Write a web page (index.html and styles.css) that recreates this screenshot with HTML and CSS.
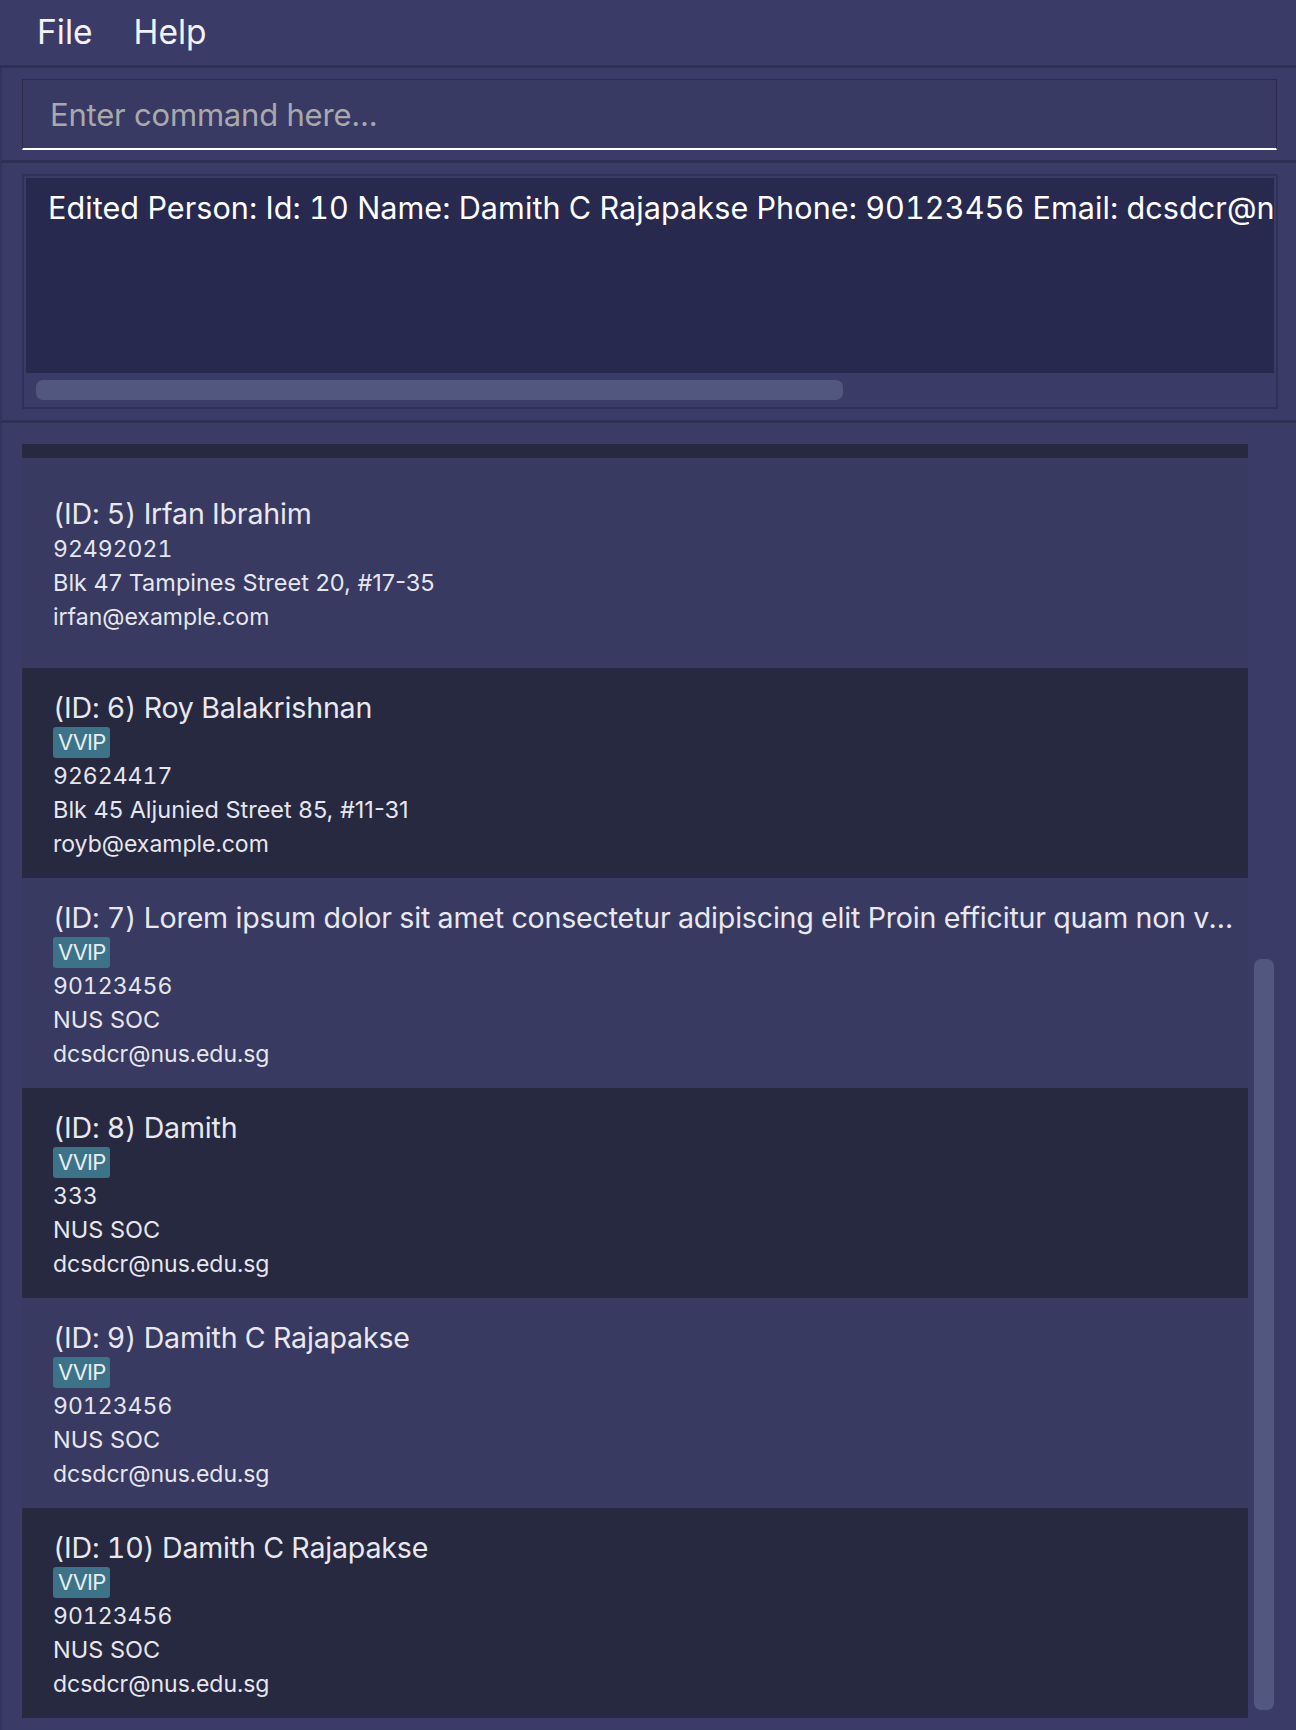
FILE: index.html
```html
<!DOCTYPE html>
<html lang="en">
<head>
<meta charset="utf-8">
<title>Address Book</title>
<link rel="stylesheet" href="styles.css">
</head>
<body>
<div class="app">
  <nav class="menubar">
    <span class="menu-item">File</span>
    <span class="menu-item">Help</span>
  </nav>

  <section class="pane command-pane">
    <div class="command-box">
      <input class="command-input" type="text" placeholder="Enter command here...">
    </div>
  </section>

  <section class="pane result-pane">
    <div class="result-box">
      <div class="result-text">Edited Person: Id: 10 Name: Damith C Rajapakse Phone: 90123456 Email: dcsdcr@nus.edu.sg Address: NUS SOC Tags: [VVIP]</div>
      <div class="hscroll"><div class="hscroll-thumb"></div></div>
    </div>
  </section>

  <section class="pane list-pane">
    <div class="list-viewport">
      <div class="list">
        <div class="card card-dark card-peek"></div>

        <div class="card card-light">
          <div class="card-title">(ID: 5) Irfan Ibrahim</div>
          <div class="card-line">92492021</div>
          <div class="card-line card-address">Blk 47 Tampines Street 20, #17-35</div>
          <div class="card-line">irfan@example.com</div>
        </div>

        <div class="card card-dark">
          <div class="card-title">(ID: 6) Roy Balakrishnan</div>
          <div class="tags"><span class="tag">VVIP</span></div>
          <div class="card-line">92624417</div>
          <div class="card-line card-address">Blk 45 Aljunied Street 85, #11-31</div>
          <div class="card-line">royb@example.com</div>
        </div>

        <div class="card card-light">
          <div class="card-title">(ID: 7) Lorem ipsum dolor sit amet consectetur adipiscing elit Proin efficitur quam non vehicula pretium</div>
          <div class="tags"><span class="tag">VVIP</span></div>
          <div class="card-line">90123456</div>
          <div class="card-line card-address">NUS SOC</div>
          <div class="card-line">dcsdcr@nus.edu.sg</div>
        </div>

        <div class="card card-dark">
          <div class="card-title">(ID: 8) Damith</div>
          <div class="tags"><span class="tag">VVIP</span></div>
          <div class="card-line">333</div>
          <div class="card-line card-address">NUS SOC</div>
          <div class="card-line">dcsdcr@nus.edu.sg</div>
        </div>

        <div class="card card-light">
          <div class="card-title">(ID: 9) Damith C Rajapakse</div>
          <div class="tags"><span class="tag">VVIP</span></div>
          <div class="card-line">90123456</div>
          <div class="card-line card-address">NUS SOC</div>
          <div class="card-line">dcsdcr@nus.edu.sg</div>
        </div>

        <div class="card card-dark">
          <div class="card-title">(ID: 10) Damith C Rajapakse</div>
          <div class="tags"><span class="tag">VVIP</span></div>
          <div class="card-line">90123456</div>
          <div class="card-line card-address">NUS SOC</div>
          <div class="card-line">dcsdcr@nus.edu.sg</div>
        </div>
      </div>
    </div>
    <div class="vscroll"><div class="vscroll-thumb"></div></div>
  </section>
</div>
</body>
</html>
```

FILE: styles.css
```css
* {
  box-sizing: border-box;
}

html, body {
  margin: 0;
  padding: 0;
}

body {
  background: #3a3b66;
  font-family: Inter, "Noto Sans", sans-serif;
  font-variant-numeric: tabular-nums;
  color: #e6e6ee;
}

.app {
  width: 1296px;
  height: 1730px;
  display: flex;
  flex-direction: column;
  overflow: hidden;
}

/* Menu bar */
.menubar {
  height: 68px;
  flex: none;
  display: flex;
  align-items: flex-start;
  padding: 12px 0 0 37px;
  gap: 41px;
  background: #3a3b66;
  border-bottom: 3px solid #2f3056;
}

.menu-item {
  font-size: 33.5px;
  line-height: 40px;
  letter-spacing: 0;
  color: #f2f2f6;
}

/* Panes */
.pane {
  flex: none;
  background: #3a3b66;
  border-left: 2px solid #34355d;
}

.command-pane {
  height: 95px;
  padding: 11px 19px 0 20px;
  border-bottom: 3px solid #2f3056;
}

.command-box {
  height: 71px;
  border: 1px solid #2a2b4e;
  border-bottom: 2px solid #ffffff;
  background: #393a63;
  display: flex;
  align-items: center;
}

.command-input {
  width: 100%;
  height: 100%;
  border: none;
  outline: none;
  background: transparent;
  font-family: Inter, "Noto Sans", sans-serif;
  font-size: 31px;
  letter-spacing: -0.2px;
  color: #ffffff;
  padding: 0 0 0 27px;
}

.command-input::placeholder {
  color: #a9a9ad;
}

.result-pane {
  height: 260px;
  padding: 11px 18px 0 20px;
  border-bottom: 3px solid #2f3056;
}

.result-box {
  height: 235px;
  border: 2px solid #30315a;
  padding: 2px 2px 0 2px;
  display: flex;
  flex-direction: column;
}

.result-text {
  height: 195px;
  flex: none;
  background: #27294e;
  color: #ffffff;
  font-size: 30.6px;
  line-height: 38px;
  letter-spacing: 0.05px;
  padding: 11px 0 0 22px;
  white-space: nowrap;
  overflow: hidden;
}

.hscroll {
  flex: 1;
  padding: 7px 0 0 10px;
}

.hscroll-thumb {
  width: 807px;
  height: 20px;
  border-radius: 7px;
  background: #52577f;
}

/* Person list */
.list-pane {
  flex: 1;
  min-height: 0;
  display: flex;
  padding: 21px 0 12px 20px;
}

.list-viewport {
  width: 1226px;
  flex: none;
  overflow: hidden;
}

.list {
  display: flex;
  flex-direction: column;
}

.card {
  height: 210px;
  flex: none;
  display: flex;
  flex-direction: column;
  justify-content: center;
  padding: 4px 13px 0 31px;
}

.card-peek {
  height: 14px;
  padding: 0;
}

.card-light {
  background: #383a61;
}

.card-dark {
  background: #272941;
}

.card-title {
  font-size: 28.6px;
  line-height: 36px;
  letter-spacing: -0.2px;
  color: #e8e8ee;
  white-space: nowrap;
  overflow: hidden;
  text-overflow: ellipsis;
}

.card-line {
  font-size: 23px;
  line-height: 34px;
  letter-spacing: 0;
  color: #e6e6ee;
  white-space: nowrap;
}

.card-address {
  font-size: 23.5px;
  font-variant-numeric: normal;
}

.tags {
  display: flex;
  margin: 1px 0 1px;
}

.tag {
  height: 31px;
  line-height: 31px;
  font-size: 22px;
  letter-spacing: -0.8px;
  padding: 0 5px;
  border-radius: 3px;
  background: #3d7388;
  color: #e8eef0;
}

.vscroll {
  width: 20px;
  flex: none;
  margin-left: 6px;
}

.vscroll-thumb {
  margin-top: 515px;
  height: 751px;
  border-radius: 7px;
  background: #52577f;
}
```
